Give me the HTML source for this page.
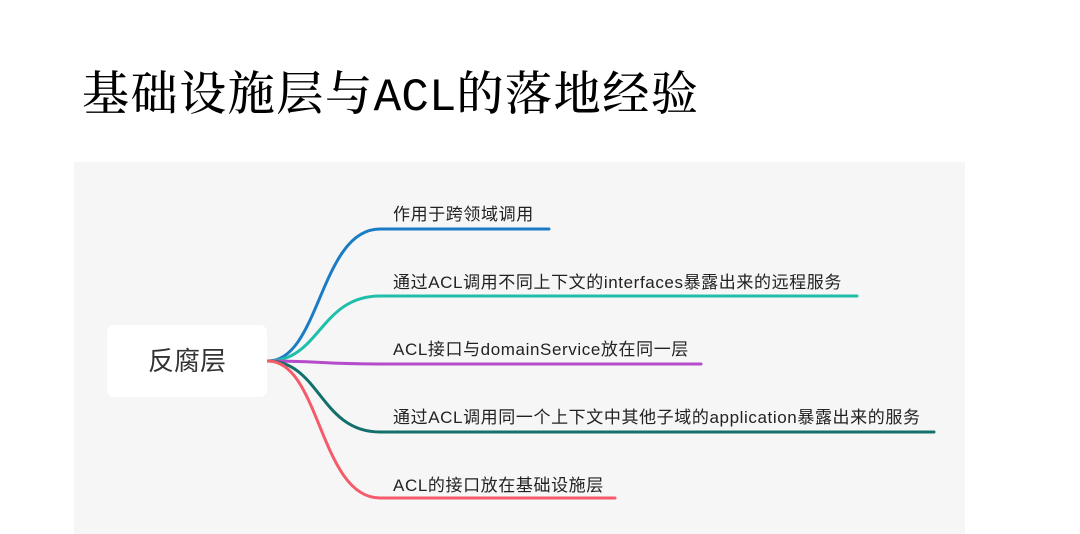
<!DOCTYPE html>
<html><head><meta charset="utf-8"><style>
body{margin:0;width:1080px;height:534px;background:#fff;position:relative;overflow:hidden;font-family:"Liberation Sans","Noto Sans CJK SC",sans-serif}
.t{position:absolute;left:82px;top:57px;font-family:"Liberation Serif","Noto Serif CJK SC",serif;font-size:47px;color:#000;white-space:nowrap;font-weight:500;letter-spacing:1.6px}
.t span{font-family:"Liberation Mono",monospace;font-size:46px;letter-spacing:0}
.p{position:absolute;left:74px;top:162px;width:891px;height:372px;background:#f6f6f6}
.n{position:absolute;left:107px;top:325px;width:160px;height:72px;background:#fff;border-radius:7px;font-size:26px;color:#333;text-align:center;line-height:72px}
.l{position:absolute;left:393px;font-size:17px;letter-spacing:0.6px;color:#222;white-space:nowrap}
</style></head><body>
<div class="t">基础设施层与<span>ACL</span>的落地经验</div>
<div class="p"></div>
<svg style="position:absolute;left:0;top:0" width="1080" height="534" fill="none" stroke-width="3" stroke-linecap="round">
<path d="M268 361 C320 361,320 229,380 229 L549 229" stroke="#1a7cc4"/>
<path d="M268 361 C320 361,320 296,380 296 L857 296" stroke="#1fbfaa"/>
<path d="M268 361 C320 361,320 364,380 364 L701 364" stroke="#b54ccc"/>
<path d="M268 361 C320 361,320 432,380 432 L934 432" stroke="#13706b"/>
<path d="M268 361 C320 361,320 498,380 498 L615 498" stroke="#f55b6a"/>
</svg>
<div class="n">反腐层</div>
<div class="l" style="top:200px">作用于跨领域调用</div>
<div class="l" style="top:268px">通过ACL调用不同上下文的interfaces暴露出来的远程服务</div>
<div class="l" style="top:335px">ACL接口与domainService放在同一层</div>
<div class="l" style="top:403px">通过ACL调用同一个上下文中其他子域的application暴露出来的服务</div>
<div class="l" style="top:471px">ACL的接口放在基础设施层</div>
</body></html>
